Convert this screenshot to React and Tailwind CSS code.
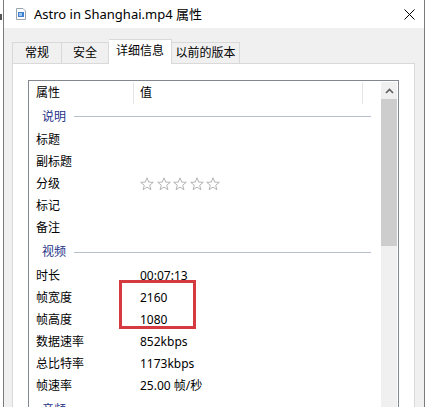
import React from "react";

const FONT = { fontFamily: '"Noto Sans", "Noto Sans CJK SC", sans-serif' };

function Star() {
  return (
    <svg width="14" height="14" viewBox="0 0 14 14" className="block">
      <polygon
        points="7,0.8 8.7,5.1 13.3,5.3 9.7,8.2 10.9,12.7 7,10.1 3.1,12.7 4.3,8.2 0.7,5.3 5.3,5.1"
        fill="none"
        stroke="#b4b4b4"
        strokeWidth="1"
        strokeLinejoin="round"
      />
    </svg>
  );
}

function Row({ label, value }) {
  return (
    <div className="flex h-[22px] shrink-0 items-center leading-none text-black">
      <div className="w-[104px] pl-[6px]">{label}</div>
      <div className="pl-[6px]">{value}</div>
    </div>
  );
}

function Group({ label, tall }) {
  return (
    <div className={tall ? "flex h-[26px] shrink-0 items-center leading-none" : "flex h-[25px] shrink-0 items-center leading-none"}>
      <div className="pl-[12px] pr-[8px] text-[#1e3287]">{label}</div>
      <div className="h-px flex-1 bg-[#b7c0cc]"></div>
      <div className="w-[10px]"></div>
    </div>
  );
}

export default function App() {
  return (
    <div className="relative flex h-[407px] w-[426px] items-start overflow-hidden bg-white text-[12px]" style={FONT}>
      <div className="flex w-[3px] shrink-0 flex-col bg-white pt-[14px]">
        <div className="h-[6px] w-[2px] bg-[#555]"></div>
      </div>
      <div className="flex h-[440px] w-[422px] shrink-0 flex-col border-x border-[#7b7b7b]">
        {/* title bar */}
        <div className="flex h-[28px] shrink-0 items-center bg-white">
          <div className="ml-[11px] mr-[7px]">
            <svg width="12" height="12" viewBox="0 0 12 12" className="block">
              <path d="M1.5 0.5 H8 L10.5 3 V11.5 H1.5 Z" fill="#fff" stroke="#9aa4b0" />
              <rect x="3" y="4" width="6" height="5" fill="#3f7fd0" />
              <rect x="4" y="5" width="3" height="3" fill="#9cc4ee" />
            </svg>
          </div>
          <div className="text-[13px] leading-none text-black">Astro in Shanghai.mp4 属性</div>
          <div className="flex-1"></div>
          <div className="mr-[9px]">
            <svg width="11" height="11" viewBox="0 0 11 11" className="block">
              <path d="M0.5 0.5 L10.5 10.5 M10.5 0.5 L0.5 10.5" stroke="#000" strokeWidth="1" />
            </svg>
          </div>
        </div>
        {/* body */}
        <div className="flex flex-1 flex-col bg-[#f0f0f0]">
          <div className="ml-[8px] flex h-[35px] shrink-0 items-end pt-[11px]">
            <div className="flex h-[21px] w-[50px] items-center justify-center border border-b-0 border-[#d9d9d9] bg-[#f0f0f0] leading-none">常规</div>
            <div className="flex h-[21px] w-[47px] items-center justify-center border border-b-0 border-l-0 border-[#d9d9d9] bg-[#f0f0f0] leading-none">安全</div>
            <div className="relative z-10 -mb-px flex h-[25px] w-[63px] items-center justify-center border border-b-0 border-l-0 border-[#d9d9d9] bg-white pb-[2px] leading-none">详细信息</div>
            <div className="flex h-[21px] w-[68px] items-center justify-center border border-b-0 border-l-0 border-[#d9d9d9] bg-[#f0f0f0] leading-none">以前的版本</div>
          </div>
          <div className="ml-[8px] w-[403px] flex-1 border border-b-0 border-[#d9d9d9] bg-white pl-[15px] pr-[15px] pt-[16px]">
            <div className="flex h-[400px] border border-b-0 border-[#828790] bg-white p-px">
              <div className="flex flex-1 flex-col">
                <div className="flex h-[22px] shrink-0 leading-none text-black">
                  <div className="flex w-[104px] items-center border-r border-[#e5e5e5] pl-[6px]">属性</div>
                  <div className="flex w-[229px] items-center border-r border-[#e5e5e5] pl-[6px]">值</div>
                </div>
                <Group label="说明" />
                <Row label="标题" value="" />
                <Row label="副标题" value="" />
                <div className="flex h-[22px] shrink-0 items-center leading-none text-black">
                  <div className="w-[104px] pl-[6px]">分级</div>
                  <div className="flex gap-[2.5px] pl-[6px]">
                    <Star />
                    <Star />
                    <Star />
                    <Star />
                    <Star />
                  </div>
                </div>
                <Row label="标记" value="" />
                <Row label="备注" value="" />
                <Group label="视频" tall />
                <Row label="时长" value="00:07:13" />
                <Row label="帧宽度" value="2160" />
                <Row label="帧高度" value="1080" />
                <Row label="数据速率" value="852kbps" />
                <Row label="总比特率" value="1173kbps" />
                <Row label="帧速率" value="25.00 帧/秒" />
                <Group label="音频" />
              </div>
              {/* scrollbar */}
              <div className="flex w-[16px] shrink-0 flex-col bg-[#f0f0f0]">
                <div className="flex h-[17px] shrink-0 items-center justify-center">
                  <svg width="9" height="6" viewBox="0 0 9 6" className="block">
                    <path d="M1 5 L4.5 1.5 L8 5" fill="none" stroke="#606060" strokeWidth="1.6" />
                  </svg>
                </div>
                <div className="h-[147px] shrink-0 bg-[#cdcdcd]"></div>
              </div>
            </div>
          </div>
        </div>
      </div>
      {/* red highlight */}
      <div className="absolute left-[119px] top-[280px] h-[49px] w-[77px] border-[3px] border-[#d43a3f]"></div>
    </div>
  );
}
